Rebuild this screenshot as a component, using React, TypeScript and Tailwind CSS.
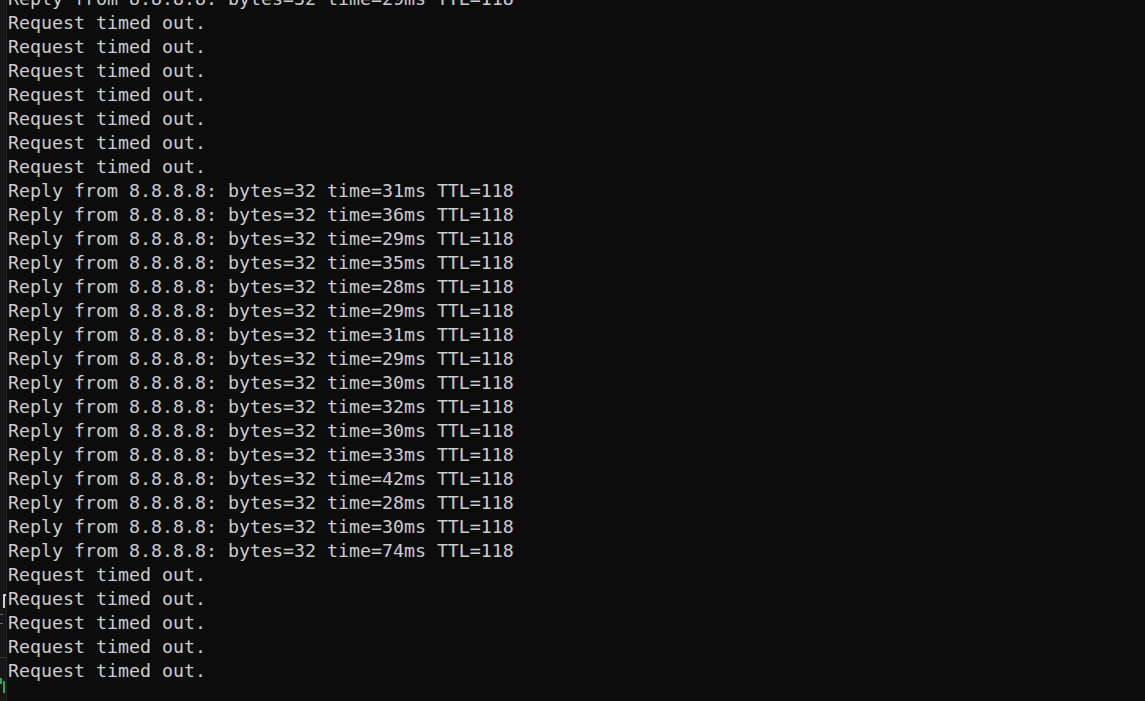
const times = [31, 36, 29, 35, 28, 29, 31, 29, 30, 32, 30, 33, 42, 28, 30, 74];

const reply = (t: number) =>
  `Reply from 8.8.8.8: bytes=32 time=${t}ms TTL=118`;

const lines: string[] = [
  reply(29),
  ...Array(7).fill("Request timed out."),
  ...times.map(reply),
  ...Array(5).fill("Request timed out."),
];

export default function App() {
  return (
    <div className="flex h-[701px] w-full overflow-hidden bg-[#0c0c0c]">
      {/* gutter with scroll marks */}
      <div className="flex w-[7px] shrink-0 flex-col justify-end border-r border-[#262626] bg-[#161616] pb-[8px]">
        <div className="ml-[3px] h-[14px] w-[3px] border-l-2 border-t-2 border-[#d0d0d0]" />
        <div className="mt-[6px] h-px w-[3px] bg-[#6a6a6a]" />
        <div className="mt-[8px] h-px w-[3px] bg-[#6a6a6a]" />
        <div className="mt-[33px] h-px w-[6px] bg-[#3a3a3a]" />
        <div className="mt-[20px] flex gap-px">
          <div className="h-[6px] w-[2px] bg-[#3fa45a]" />
          <div className="mt-[3px] h-[12px] w-[2px] bg-[#3fa45a]" />
        </div>
      </div>

      {/* terminal output */}
      <div className="-mt-[13px] flex flex-col pl-px font-['DejaVu_Sans_Mono',monospace] text-[18.27px] leading-[24px] text-[#cccccc]">
        {lines.map((l, i) => (
          <div key={i} className="whitespace-pre">
            {l}
          </div>
        ))}
      </div>
    </div>
  );
}
